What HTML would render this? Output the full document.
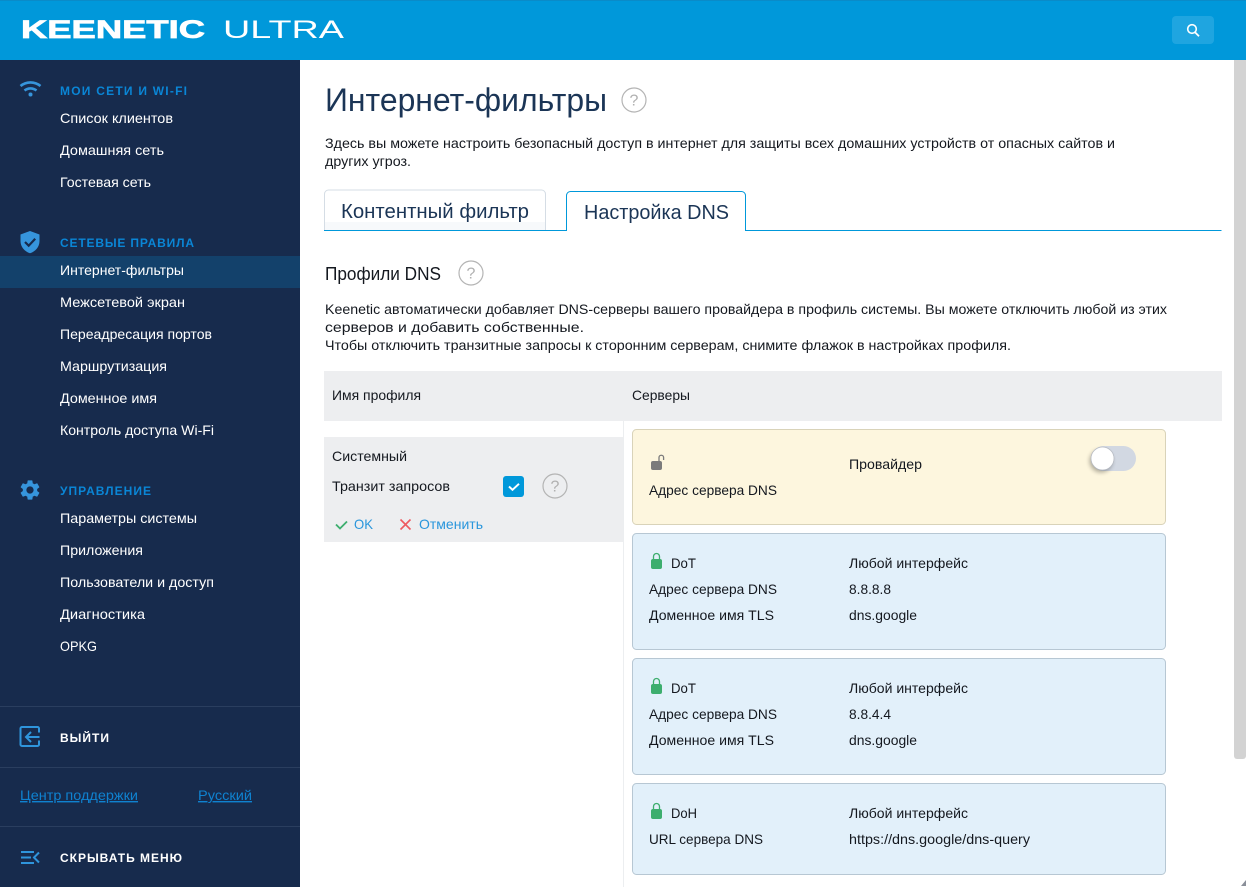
<!DOCTYPE html>
<html lang="ru"><head><meta charset="utf-8"><title>Keenetic Ultra</title>
<style>
html,body{margin:0;padding:0;width:1246px;height:887px;overflow:hidden;background:#fff}
svg{display:block;position:absolute;left:0;top:0}
text{font-family:"Liberation Sans",sans-serif;font-size:14px;fill:#14181f;white-space:pre}
.n{fill:#fff;font-size:14px}
.h{fill:#0a86d6;font-size:12px;font-weight:700}
.w{fill:#fff;font-size:12px;font-weight:700}
.l{fill:#0f82d0;font-size:14px;text-decoration:underline}
.t{fill:#1b3556}
.q{font-size:16px;fill:#b0b0b0}
</style></head><body>
<svg width="1246" height="887" viewBox="0 0 1246 887" xmlns="http://www.w3.org/2000/svg">
<defs><filter id="s" x="-50%" y="-50%" width="200%" height="200%"><feGaussianBlur stdDeviation="2"/></filter></defs>
<rect width="1246" height="887" fill="#fff"/>
<!-- header -->
<rect width="1246" height="60" fill="#0098da"/>
<rect width="1246" height="1" fill="#0a8bc8"/>
<text x="21" y="38" textLength="184" lengthAdjust="spacingAndGlyphs" style="font-size:25px;font-weight:700;fill:#fff;stroke:#fff;stroke-width:.7">KEENETIC</text>
<text x="223" y="38" textLength="121" lengthAdjust="spacingAndGlyphs" style="font-size:25px;fill:#fff">ULTRA</text>
<rect x="1172" y="16" width="42" height="28" rx="4" fill="#1fa5e0"/>
<circle cx="1192" cy="29" r="4.300" fill="none" stroke="#fff" stroke-width="1.600"/>
<path d="M1195 32.200l4 4" stroke="#fff" stroke-width="1.800" fill="none"/>
<!-- scrollbar -->
<rect x="1234" y="60" width="12" height="699" rx="3" fill="#d3d3d3"/>
<rect x="1234" y="60" width="12" height="10" fill="#d3d3d3"/>
<path d="M1246 880v6h-5z" fill="#8a8f99"/>
<!-- sidebar -->
<rect y="60" width="300" height="827" fill="#172b4d"/>
<rect y="256" width="300" height="32" fill="#13416b"/>
<rect y="706" width="300" height="1" fill="#2a3e5f"/>
<rect y="767" width="300" height="1" fill="#2a3e5f"/>
<rect y="826" width="300" height="1" fill="#2a3e5f"/>
<!-- wifi -->
<g fill="none" stroke="#3695dc" stroke-width="2.600">
<path d="M20.500 86c5.800-4.800 14.200-4.800 20 0"/><path d="M24.500 90.500c3.500-2.800 8.500-2.800 12 0"/>
</g><circle cx="30.500" cy="94.500" r="2" fill="#3695dc"/>
<text class="h" x="60" y="95" textLength="127" lengthAdjust="spacing">МОИ СЕТИ И WI-FI</text>
<text class="n" x="60" y="123" textLength="113" lengthAdjust="spacingAndGlyphs">Список клиентов</text>
<text class="n" x="60" y="155" textLength="104" lengthAdjust="spacingAndGlyphs">Домашняя сеть</text>
<text class="n" x="60" y="187" textLength="91" lengthAdjust="spacingAndGlyphs">Гостевая сеть</text>
<!-- shield -->
<path d="M30 231l9.500 3.500v6.500c0 6-4 10.300-9.500 12.300-5.500-2-9.500-6.300-9.500-12.300v-6.500z" fill="#3695dc"/>
<path d="M25 242l3.700 3.700 6.500-7" fill="none" stroke="#172b4d" stroke-width="2.200"/>
<text class="h" x="60" y="247" textLength="134" lengthAdjust="spacing">СЕТЕВЫЕ ПРАВИЛА</text>
<text class="n" x="60" y="275" textLength="124" lengthAdjust="spacingAndGlyphs">Интернет-фильтры</text>
<text class="n" x="60" y="307" textLength="125" lengthAdjust="spacingAndGlyphs">Межсетевой экран</text>
<text class="n" x="60" y="339" textLength="152" lengthAdjust="spacingAndGlyphs">Переадресация портов</text>
<text class="n" x="60" y="371" textLength="107" lengthAdjust="spacingAndGlyphs">Маршрутизация</text>
<text class="n" x="60" y="403" textLength="97" lengthAdjust="spacingAndGlyphs">Доменное имя</text>
<text class="n" x="60" y="435" textLength="154" lengthAdjust="spacingAndGlyphs">Контроль доступа Wi-Fi</text>
<!-- gear -->
<path transform="translate(18 478)" fill="#3695dc" fill-rule="evenodd" d="M19.140 12.940c.04-.3.06-.61.06-.94 0-.32-.02-.64-.07-.94l2.030-1.580a.49.49 0 0 0 .12-.61l-1.920-3.320a.488.488 0 0 0-.59-.22l-2.390.96c-.5-.38-1.030-.7-1.620-.94l-.36-2.540a.484.484 0 0 0-.48-.41h-3.840c-.24 0-.43.17-.47.41l-.36 2.540c-.59.24-1.130.57-1.620.94l-2.390-.96c-.22-.08-.47 0-.59.22L2.740 8.870c-.12.21-.08.47.12.61l2.030 1.580c-.05.3-.09.63-.09.94s.02.64.07.94l-2.030 1.580a.49.49 0 0 0-.12.61l1.920 3.320c.12.22.37.29.59.22l2.390-.96c.5.38 1.030.7 1.620.94l.36 2.540c.05.24.24.41.48.41h3.840c.24 0 .44-.17.47-.41l.36-2.540c.59-.24 1.130-.56 1.620-.94l2.390.96c.22.08.47 0 .59-.22l1.920-3.320c.12-.22.07-.47-.12-.61l-2.010-1.580zM12 15.600c-1.980 0-3.600-1.620-3.600-3.600s1.620-3.600 3.600-3.600 3.600 1.620 3.600 3.600-1.620 3.600-3.600 3.600z"/>
<text class="h" x="60" y="495" textLength="91" lengthAdjust="spacing">УПРАВЛЕНИЕ</text>
<text class="n" x="60" y="523" textLength="137" lengthAdjust="spacingAndGlyphs">Параметры системы</text>
<text class="n" x="60" y="555" textLength="83" lengthAdjust="spacingAndGlyphs">Приложения</text>
<text class="n" x="60" y="587" textLength="154" lengthAdjust="spacingAndGlyphs">Пользователи и доступ</text>
<text class="n" x="60" y="619" textLength="85" lengthAdjust="spacingAndGlyphs">Диагностика</text>
<text class="n" x="60" y="651" textLength="37" lengthAdjust="spacingAndGlyphs">OPKG</text>
<!-- logout -->
<path d="M39 732.500v-4a1.500 1.500 0 0 0-1.500-1.500h-15.500a1.500 1.500 0 0 0-1.500 1.500v16a1.500 1.500 0 0 0 1.500 1.500h15.500a1.500 1.500 0 0 0 1.500-1.500v-4" fill="none" stroke="#2f95dc" stroke-width="2"/>
<path d="M39.500 737h-13M31 732l-5 5 5 5" fill="none" stroke="#2f95dc" stroke-width="2"/>
<text class="w" x="60" y="742" textLength="49" lengthAdjust="spacing">ВЫЙТИ</text>
<text class="l" x="20" y="800" textLength="118" lengthAdjust="spacingAndGlyphs">Центр поддержки</text>
<text class="l" x="198" y="800" textLength="54" lengthAdjust="spacingAndGlyphs">Русский</text>
<!-- collapse -->
<path d="M21 852h13M21 857.500h10M21 863h13M39 852.500l-5 5 5 5" fill="none" stroke="#2f95dc" stroke-width="2"/>
<text class="w" x="60" y="862" textLength="122" lengthAdjust="spacing">СКРЫВАТЬ МЕНЮ</text>
<!-- main -->
<text class="t" x="325" y="111" textLength="282" lengthAdjust="spacingAndGlyphs" style="font-size:32px">Интернет-фильтры</text>
<circle cx="634" cy="100" r="12" fill="#fff" stroke="#b4b4b4" stroke-width="1.200"/>
<text class="q" x="634" y="105.500" text-anchor="middle">?</text>
<text x="325" y="148" textLength="790" lengthAdjust="spacingAndGlyphs">Здесь вы можете настроить безопасный доступ в интернет для защиты всех домашних устройств от опасных сайтов и</text>
<text x="325" y="166" textLength="86" lengthAdjust="spacingAndGlyphs">других угроз.</text>
<!-- tabs -->
<path d="M324.500 230v-36a4 4 0 0 1 4-4h213a4 4 0 0 1 4 4v36z" fill="#fff" stroke="#d5dde5"/>
<rect x="325" y="222" width="220" height="8" fill="#f7f9fb"/>
<path d="M324 230.500h242.500v-35a4 4 0 0 1 4-4h171a4 4 0 0 1 4 4v35h476" fill="#fff" stroke="#0098da"/>
<text class="t" x="341" y="218" textLength="188" lengthAdjust="spacingAndGlyphs" style="font-size:20px">Контентный фильтр</text>
<text class="t" x="584" y="219" textLength="145" lengthAdjust="spacingAndGlyphs" style="font-size:20px">Настройка DNS</text>
<text x="325" y="280" textLength="116" lengthAdjust="spacingAndGlyphs" style="font-size:18px">Профили DNS</text>
<circle cx="471" cy="273" r="12" fill="#fff" stroke="#b4b4b4" stroke-width="1.200"/>
<text class="q" x="471" y="278.500" text-anchor="middle">?</text>
<text x="325" y="314" textLength="842" lengthAdjust="spacingAndGlyphs">Keenetic автоматически добавляет DNS-серверы вашего провайдера в профиль системы. Вы можете отключить любой из этих</text>
<text x="325" y="332" textLength="259" lengthAdjust="spacingAndGlyphs">серверов и добавить собственные.</text>
<text x="325" y="350" textLength="686" lengthAdjust="spacingAndGlyphs">Чтобы отключить транзитные запросы к сторонним серверам, снимите флажок в настройках профиля.</text>
<!-- table -->
<rect x="324" y="371" width="898" height="50" fill="#edeef0"/>
<text x="332" y="400" textLength="89" lengthAdjust="spacingAndGlyphs">Имя профиля</text>
<text x="632" y="400" textLength="58" lengthAdjust="spacingAndGlyphs">Серверы</text>
<rect x="623" y="421" width="1" height="466" fill="#eceef0"/>
<rect x="324" y="437" width="299" height="105" fill="#edeef0"/>
<text x="332" y="461" textLength="75" lengthAdjust="spacingAndGlyphs">Системный</text>
<text x="332" y="491" textLength="118" lengthAdjust="spacingAndGlyphs">Транзит запросов</text>
<rect x="503" y="476" width="21" height="21" rx="3" fill="#0098da"/>
<path d="M509 486.500l3.500 3.300 6.500-6" fill="none" stroke="#fff" stroke-width="2"/>
<circle cx="555" cy="486" r="12" fill="#edeef0" stroke="#b4b4b4" stroke-width="1.200"/>
<text class="q" x="555" y="491.500" text-anchor="middle">?</text>
<path d="M336 524.500l4 4 7-7" fill="none" stroke="#3dae6e" stroke-width="1.800"/>
<text x="354" y="529" textLength="19" lengthAdjust="spacingAndGlyphs" style="fill:#2a96dc">OK</text>
<path d="M400.500 519.500l10 10M410.500 519.500l-10 10" fill="none" stroke="#ee5a60" stroke-width="1.600"/>
<text x="419" y="529" textLength="64" lengthAdjust="spacingAndGlyphs" style="fill:#2a96dc">Отменить</text>
<!-- cards -->
<rect x="632.500" y="429.500" width="533" height="95" rx="4" fill="#fdf6de" stroke="#d9d3b9"/>
<rect x="632.500" y="533.500" width="533" height="116" rx="4" fill="#e2f0fa" stroke="#b7c7d3"/>
<rect x="632.500" y="658.500" width="533" height="116" rx="4" fill="#e2f0fa" stroke="#b7c7d3"/>
<rect x="632.500" y="783.500" width="533" height="91" rx="4" fill="#e2f0fa" stroke="#b7c7d3"/>
<!-- open lock -->
<rect x="651" y="461" width="11" height="9" rx="2" fill="#7b7b7b"/>
<path d="M659 461v-3.500a2.300 2.300 0 0 1 4.600 0v2.500" fill="none" stroke="#7b7b7b" stroke-width="1.300"/>
<text x="849" y="469" textLength="73" lengthAdjust="spacingAndGlyphs">Провайдер</text>
<text x="649" y="495" textLength="128" lengthAdjust="spacingAndGlyphs">Адрес сервера DNS</text>
<!-- toggle -->
<rect x="1091" y="446" width="45" height="25" rx="12.500" fill="#d2d8e2"/>
<circle cx="1101" cy="461" r="11.500" fill="#000" opacity=".3" filter="url(#s)"/>
<circle cx="1102.500" cy="458.500" r="11.500" fill="#fff" stroke="#b8bcc4" stroke-width=".8"/>
<!-- closed locks -->
<g fill="#3dae6e">
<rect x="651" y="559" width="11" height="10" rx="2"/><path d="M653.500 560v-3.500a3 3 0 0 1 6 0v3.500" fill="none" stroke="#3dae6e" stroke-width="1.300"/>
<rect x="651" y="684" width="11" height="10" rx="2"/><path d="M653.500 685v-3.500a3 3 0 0 1 6 0v3.500" fill="none" stroke="#3dae6e" stroke-width="1.300"/>
<rect x="651" y="809" width="11" height="10" rx="2"/><path d="M653.500 810v-3.500a3 3 0 0 1 6 0v3.500" fill="none" stroke="#3dae6e" stroke-width="1.300"/>
</g>
<text x="671" y="568" textLength="25" lengthAdjust="spacingAndGlyphs">DoT</text>
<text x="849" y="568" textLength="119" lengthAdjust="spacingAndGlyphs">Любой интерфейс</text>
<text x="649" y="594" textLength="128" lengthAdjust="spacingAndGlyphs">Адрес сервера DNS</text>
<text x="849" y="594" textLength="42" lengthAdjust="spacingAndGlyphs">8.8.8.8</text>
<text x="649" y="620" textLength="125" lengthAdjust="spacingAndGlyphs">Доменное имя TLS</text>
<text x="849" y="620" textLength="68" lengthAdjust="spacingAndGlyphs">dns.google</text>
<text x="671" y="693" textLength="25" lengthAdjust="spacingAndGlyphs">DoT</text>
<text x="849" y="693" textLength="119" lengthAdjust="spacingAndGlyphs">Любой интерфейс</text>
<text x="649" y="719" textLength="128" lengthAdjust="spacingAndGlyphs">Адрес сервера DNS</text>
<text x="849" y="719" textLength="42" lengthAdjust="spacingAndGlyphs">8.8.4.4</text>
<text x="649" y="745" textLength="125" lengthAdjust="spacingAndGlyphs">Доменное имя TLS</text>
<text x="849" y="745" textLength="68" lengthAdjust="spacingAndGlyphs">dns.google</text>
<text x="671" y="818" textLength="26" lengthAdjust="spacingAndGlyphs">DoH</text>
<text x="849" y="818" textLength="119" lengthAdjust="spacingAndGlyphs">Любой интерфейс</text>
<text x="649" y="844" textLength="114" lengthAdjust="spacingAndGlyphs">URL сервера DNS</text>
<text x="849" y="844" textLength="181" lengthAdjust="spacingAndGlyphs">https://dns.google/dns-query</text>
</svg>
</body></html>
